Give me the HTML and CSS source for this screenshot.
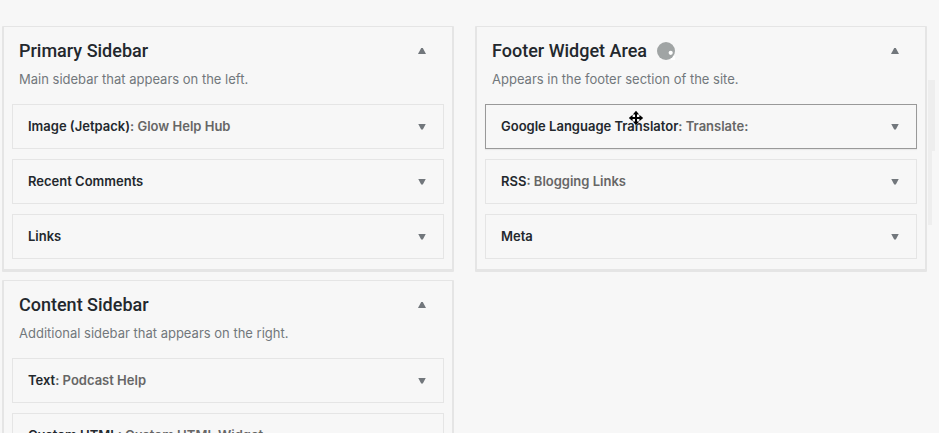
FILE: index.html
```html
<!DOCTYPE html>
<html lang="en">
<head>
  <meta charset="UTF-8" />
  <meta name="viewport" content="width=device-width, initial-scale=1.0" />
  <title>Widgets</title>
  <link rel="stylesheet" href="styles.css">
</head>
<body>
  <main class="widgets">
    <div class="column">
      <section class="sidebar">
        <div class="sidebar-name">
          <h2>Primary Sidebar</h2>
          <button class="toggle up" type="button" aria-label="Toggle Primary Sidebar"></button>
        </div>
        <p class="description">Main sidebar that appears on the left.</p>
        <div class="widget">
          <h3>Image (Jetpack)<span>: Glow Help Hub</span></h3>
          <button class="toggle" type="button" aria-label="Edit Image widget"></button>
        </div>
        <div class="widget">
          <h3>Recent Comments</h3>
          <button class="toggle" type="button" aria-label="Edit Recent Comments widget"></button>
        </div>
        <div class="widget">
          <h3>Links</h3>
          <button class="toggle" type="button" aria-label="Edit Links widget"></button>
        </div>
      </section>

      <section class="sidebar">
        <div class="sidebar-name">
          <h2>Content Sidebar</h2>
          <button class="toggle up" type="button" aria-label="Toggle Content Sidebar"></button>
        </div>
        <p class="description">Additional sidebar that appears on the right.</p>
        <div class="widget">
          <h3>Text<span>: Podcast Help</span></h3>
          <button class="toggle" type="button" aria-label="Edit Text widget"></button>
        </div>
        <div class="widget">
          <h3>Custom HTML<span>: Custom HTML Widget</span></h3>
          <button class="toggle" type="button" aria-label="Edit Custom HTML widget"></button>
        </div>
      </section>
    </div>

    <div class="column">
      <section class="sidebar">
        <div class="sidebar-name">
          <h2>Footer Widget Area</h2>
          <svg class="spinner" viewBox="0 0 18 18" aria-hidden="true">
            <path d="M14 14h4v4h-4z" fill="#fff"/>
            <circle cx="9" cy="9" r="9" fill="#a0a4a4"/>
            <circle cx="13.7" cy="10.8" r="2.1" fill="#fff"/>
          </svg>
          <button class="toggle up" type="button" aria-label="Toggle Footer Widget Area"></button>
        </div>
        <p class="description">Appears in the footer section of the site.</p>
        <div class="widget active">
          <h3>Google Language Translator<span>: Translate:</span></h3>
          <button class="toggle" type="button" aria-label="Edit Google Language Translator widget"></button>
          <svg class="move-cursor" viewBox="0 0 16 16" aria-hidden="true">
            <path d="M8 .8 11.200 4.600H9V7h2.400V4.800L15.200 8l-3.800 3.200V9H9v2.400h2.200L8 15.200 4.800 11.400H7V9H4.600v2.200L.8 8l3.800-3.200V7H7V4.600H4.800z" fill="#000" stroke="#fff" stroke-width="1" paint-order="stroke"/>
          </svg>
        </div>
        <div class="widget">
          <h3>RSS<span>: Blogging Links</span></h3>
          <button class="toggle" type="button" aria-label="Edit RSS widget"></button>
        </div>
        <div class="widget">
          <h3>Meta</h3>
          <button class="toggle" type="button" aria-label="Edit Meta widget"></button>
        </div>
      </section>
    </div>
  </main>
  <div class="edge"></div>
</body>
</html>
```
FILE: styles.css
```css
* {
  box-sizing: border-box;
}
body {
  margin: 0;
  height: 100vh;
  overflow: hidden;
  position: relative;
  background: #f7f7f7;
  color: #23282d;
  font-family: Inter, "Liberation Sans", sans-serif;
  font-size: 13px;
}
.widgets {
  display: grid;
  grid-template-columns: 1fr 1fr;
  align-items: start;
  gap: 21px;
  padding: 26px 12px 0 2px;
}
.column {
  display: grid;
  gap: 8px;
}
.sidebar {
  display: flex;
  flex-direction: column;
  gap: 10px;
  padding: 0 8px 10px;
  border: 2px solid #e5e5e5;
  border-top-width: 1px;
  border-bottom-width: 3px;
  border-radius: 1px;
}
.sidebar-name {
  display: flex;
  align-items: center;
  height: 28px;
  margin-top: 10px;
  padding: 0 1px 0 7px;
}
h2, h3, p {
  margin: 0;
}
h2 {
  font-family: Roboto, Inter, sans-serif;
  font-size: 18px;
  line-height: 28px;
  font-weight: 500;
}
.description {
  margin-top: -5px;
  padding: 0 7px 6px;
  line-height: 18px;
  color: #72777c;
}
.widget {
  position: relative;
  display: flex;
  align-items: center;
  height: 45px;
  padding-left: 15px;
  border: 1px solid #e5e5e5;
}
.widget.active {
  border-color: #999;
  box-shadow: 0 1px 1px rgba(0, 0, 0, 0.06);
}
h3 {
  padding-bottom: 2px;
  font-size: 13px;
  line-height: 20px;
  font-weight: 600;
}
h3 span {
  color: #666;
}
.toggle {
  display: flex;
  align-items: center;
  justify-content: center;
  width: 42px;
  height: 28px;
  margin-left: auto;
  padding: 0;
  border: 0;
  background: none;
  cursor: pointer;
}
.toggle::before {
  content: "";
  width: 8px;
  height: 6px;
  background: #72777c;
  clip-path: polygon(0 0, 100% 0, 60% 100%, 40% 100%);
}
.toggle.up::before {
  clip-path: polygon(40% 0, 60% 0, 100% 100%, 0 100%);
}
.spinner {
  width: 18px;
  height: 18px;
  margin-left: 10px;
}
/* drag cursor over the widget title */
.move-cursor {
  position: absolute;
  left: 142px;
  top: 5px;
  width: 16px;
  height: 16px;
}
.edge {
  position: absolute;
  top: 80px;
  right: 4px;
  width: 7px;
  height: 145px;
  background: #eee;
  clip-path: polygon(0 0, 100% 0, 100% 71px, 4px 71px, 4px 100%, 0 100%);
}
```
